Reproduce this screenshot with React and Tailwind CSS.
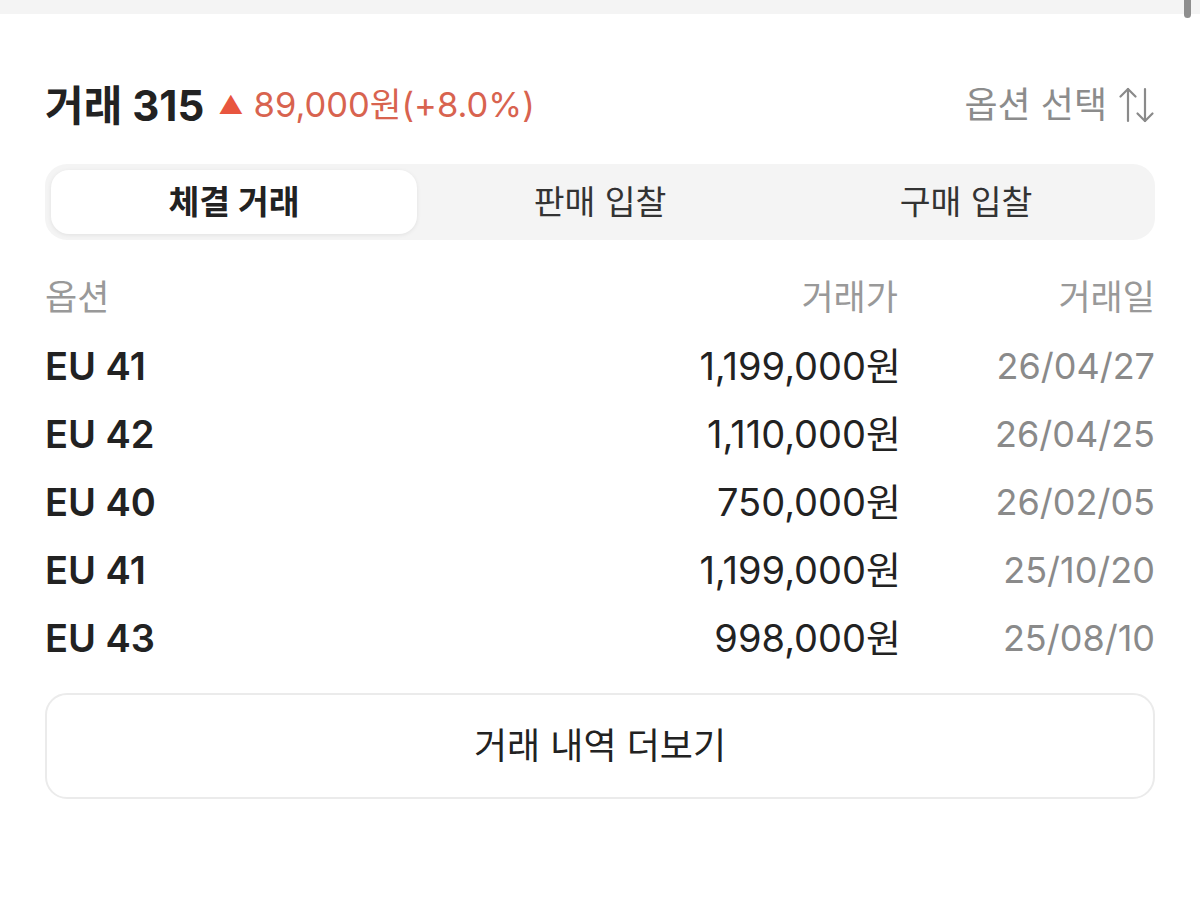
import React from 'react';

const trades = [
  { option: 'EU 41', price: '1,199,000원', date: '26/04/27' },
  { option: 'EU 42', price: '1,110,000원', date: '26/04/25' },
  { option: 'EU 40', price: '750,000원', date: '26/02/05' },
  { option: 'EU 41', price: '1,199,000원', date: '25/10/20' },
  { option: 'EU 43', price: '998,000원', date: '25/08/10' },
];

const tabs = ['체결 거래', '판매 입찰', '구매 입찰'];

function SortArrows() {
  return (
    <svg width="36" height="36" viewBox="0 0 36 36" fill="none" stroke="#8a8a8a" strokeWidth="2.2" strokeLinecap="round" strokeLinejoin="round">
      <path d="M9 2v32" />
      <path d="M1.5 9.5 9 2l7.5 7.5" />
      <path d="M26 2v32" />
      <path d="M18.5 26.5 26 34l7.5-7.5" />
    </svg>
  );
}

export default function App() {
  return (
    <div
      className="relative min-h-screen w-[1200px] h-[898px] bg-white overflow-hidden"
      style={{ fontFamily: 'Inter, "Noto Sans CJK KR", sans-serif' }}
    >
      {/* top strip + scrollbar */}
      <div className="h-[14px] bg-[#f4f4f4]" />
      <div className="absolute top-0 right-[9px] w-[7px] h-[18px] rounded-b-full bg-[#8e8e8e]" />

      <div className="px-[45px]">
        <header className="mt-[63px] h-[56px] flex items-center justify-between">
          <div className="flex items-center">
            <span className="text-[42px] font-bold text-[#222]">거래 315</span>
            <span className="ml-[14px] text-[25px] text-[#e8553f] leading-none">▲</span>
            <span className="ml-[10px] text-[34.5px] text-[#d8634f]">89,000원(+8.0%)</span>
          </div>
          <div className="flex items-center gap-[12px] text-[36px] text-[#8c8c8c]">
            <span>옵션 선택</span>
            <SortArrows />
          </div>
        </header>

        <div className="mt-[31px] h-[76px] p-[6px] rounded-[22px] bg-[#f4f4f4] grid grid-cols-3">
          {tabs.map((t, i) => (
            <button
              key={t}
              className={
                i === 0
                  ? 'rounded-[18px] bg-white shadow-[0_1px_4px_rgba(0,0,0,0.08)] text-[33.5px] font-bold text-[#222]'
                  : 'text-[33.5px] text-[#333]'
              }
            >
              {t}
            </button>
          ))}
        </div>

        <div className="mt-[22px] h-[70px] flex items-center text-[35px] text-[#999]">
          <span className="flex-1">옵션</span>
          <span className="text-right">거래가</span>
          <span className="w-[257px] text-right">거래일</span>
        </div>

        {trades.map((r, i) => (
          <div key={i} className="h-[68px] flex items-center">
            <span className="flex-1 text-[38px] font-semibold text-[#222]">{r.option}</span>
            <span className="text-right text-[38px] text-[#222] -mr-[3px]">{r.price}</span>
            <span className="w-[257px] text-right text-[36px] text-[#8a8a8a]">{r.date}</span>
          </div>
        ))}

        <button className="mt-[21px] w-full h-[106px] rounded-[22px] border-2 border-[#ebebeb] text-[36px] text-[#222]">
          거래 내역 더보기
        </button>
      </div>
    </div>
  );
}
